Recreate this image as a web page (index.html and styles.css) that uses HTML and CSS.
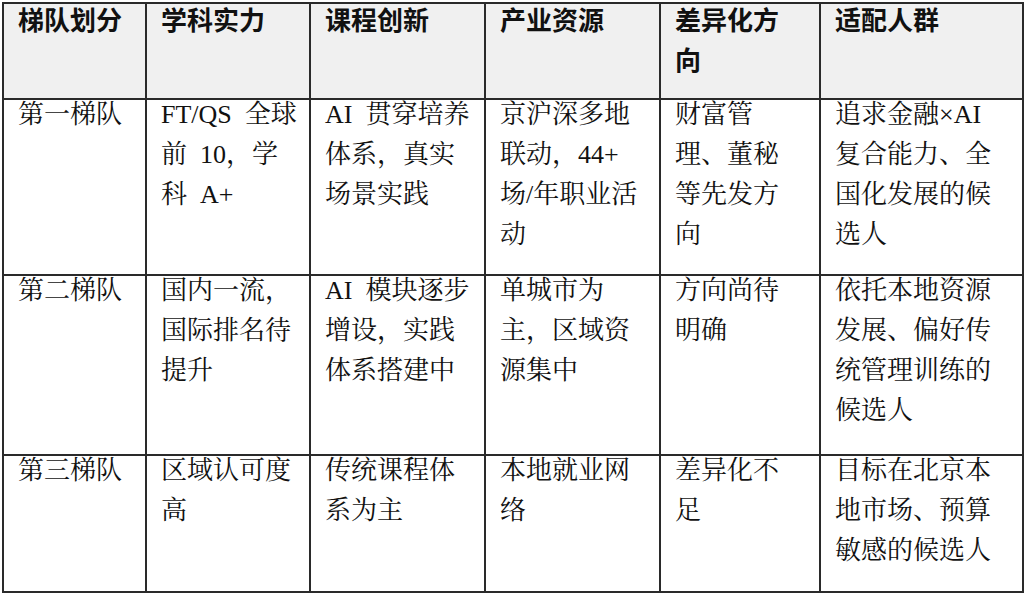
FILE: index.html
```html
<!DOCTYPE html>
<html lang="zh-CN">
<head>
<meta charset="utf-8">
<title>梯队划分</title>
<link rel="stylesheet" href="styles.css">
</head>
<body>
<table class="tier-table">
  <colgroup>
    <col class="c1"><col class="c2"><col class="c3"><col class="c4"><col class="c5"><col class="c6">
  </colgroup>
  <thead>
    <tr>
      <th><div class="cell">梯队划分</div></th>
      <th><div class="cell">学科实力</div></th>
      <th><div class="cell">课程创新</div></th>
      <th><div class="cell">产业资源</div></th>
      <th><div class="cell">差异化方<br>向</div></th>
      <th><div class="cell">适配人群</div></th>
    </tr>
  </thead>
  <tbody>
    <tr>
      <td><div class="cell">第一梯队</div></td>
      <td><div class="cell">FT/QS&ensp;全球<br>前&ensp;10，学<br>科&ensp;A+</div></td>
      <td><div class="cell">AI&ensp;贯穿培养<br>体系，真实<br>场景实践</div></td>
      <td><div class="cell">京沪深多地<br>联动，44+<br>场/年职业活<br>动</div></td>
      <td><div class="cell">财富管<br>理、董秘<br>等先发方<br>向</div></td>
      <td><div class="cell">追求金融×AI<br>复合能力、全<br>国化发展的候<br>选人</div></td>
    </tr>
    <tr>
      <td><div class="cell">第二梯队</div></td>
      <td><div class="cell">国内一流，<br>国际排名待<br>提升</div></td>
      <td><div class="cell">AI&ensp;模块逐步<br>增设，实践<br>体系搭建中</div></td>
      <td><div class="cell">单城市为<br>主，区域资<br>源集中</div></td>
      <td><div class="cell">方向尚待<br>明确</div></td>
      <td><div class="cell">依托本地资源<br>发展、偏好传<br>统管理训练的<br>候选人</div></td>
    </tr>
    <tr>
      <td><div class="cell">第三梯队</div></td>
      <td><div class="cell">区域认可度<br>高</div></td>
      <td><div class="cell">传统课程体<br>系为主</div></td>
      <td><div class="cell">本地就业网<br>络</div></td>
      <td><div class="cell">差异化不<br>足</div></td>
      <td><div class="cell">目标在北京本<br>地市场、预算<br>敏感的候选人</div></td>
    </tr>
  </tbody>
</table>
</body>
</html>
```

FILE: styles.css
```css
html, body {
  margin: 0;
  padding: 0;
  background: #ffffff;
}

body {
  padding: 2px 0 0 2px;
}

.tier-table {
  border-collapse: collapse;
  table-layout: fixed;
  width: 1020px;
  color: #111;
  font-family: "Liberation Serif", "Noto Serif CJK SC", "Noto Sans CJK SC", serif;
  font-size: 26px;
  line-height: 40px;
}

.c1 { width: 143px; }
.c2 { width: 164px; }
.c3 { width: 175px; }
.c4 { width: 175px; }
.c5 { width: 160px; }
.c6 { width: 203px; }

.tier-table th,
.tier-table td {
  border: 2px solid #2a2a2a;
  padding: 0 10px 16px 14px;
  text-align: left;
  vertical-align: top;
  white-space: nowrap;
}

.cell {
  margin-top: -5px;
}

.tier-table th {
  background: #f0f0f0;
  font-family: "Noto Sans CJK SC", "Liberation Sans", sans-serif;
  font-weight: 700;
  height: 78px;
}

.tier-table tbody tr:nth-child(1) td { height: 158px; }
.tier-table tbody tr:nth-child(2) td { height: 162px; }
.tier-table tbody tr:nth-child(3) td { height: 119px; }
```
